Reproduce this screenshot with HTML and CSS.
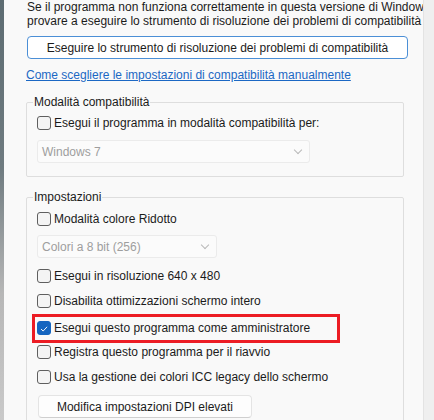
FILE: index.html
```html
<!DOCTYPE html>
<html lang="it">
<head>
<meta charset="utf-8">
<link rel="stylesheet" href="styles.css">
</head>
<body>
<div class="window">
  <div class="edge-left"></div>
  <div class="panel">
    <p class="intro">Se il programma non funziona correttamente in questa versione di Windows,<br>provare a eseguire lo strumento di risoluzione dei problemi di compatibilità</p>
    <button class="btn btn-primary">Eseguire lo strumento di risoluzione dei problemi di compatibilità</button>
    <a class="link" href="#">Come scegliere le impostazioni di compatibilità manualmente</a>

    <fieldset class="group group-compat">
      <legend>Modalità compatibilità</legend>
      <label class="check"><span class="box"></span>Esegui il programma in modalità compatibilità per:</label>
      <div class="select select-wide"><span>Windows 7</span><span class="chev"></span></div>
    </fieldset>

    <fieldset class="group group-settings">
      <legend>Impostazioni</legend>
      <label class="check first"><span class="box"></span>Modalità colore Ridotto</label>
      <div class="select select-narrow"><span>Colori a 8 bit (256)</span><span class="chev"></span></div>
      <label class="check after-select"><span class="box"></span>Esegui in risoluzione 640 x 480</label>
      <label class="check"><span class="box"></span>Disabilita ottimizzazioni schermo intero</label>
      <label class="check highlighted"><span class="box checked"><svg viewBox="0 0 14 14" width="14" height="14"><path d="M3.8 7.3 L6 9.4 L10.3 4.8" fill="none" stroke="#fff" stroke-width="1.1" stroke-linecap="round" stroke-linejoin="round"/></svg></span>Esegui questo programma come amministratore</label>
      <label class="check after-highlight"><span class="box"></span>Registra questo programma per il riavvio</label>
      <label class="check"><span class="box"></span>Usa la gestione dei colori ICC legacy dello schermo</label>
      <button class="btn btn-secondary">Modifica impostazioni DPI elevati</button>
    </fieldset>
  </div>
  <div class="edge-right"></div>
</div>
</body>
</html>
```

FILE: styles.css
```css
html, body {
  margin: 0;
  padding: 0;
}
body {
  width: 434px;
  height: 420px;
  overflow: hidden;
  background: #efefef;
  font-family: "Liberation Sans", Arial, sans-serif;
  font-size: 12px;
  color: #1b1b1b;
}
.window {
  display: flex;
  height: 420px;
}
.edge-left {
  width: 4px;
  flex: none;
  background: linear-gradient(to bottom, #5d6c72 0%, #6f7b80 40%, #b7b7b7 70%, #c9c9c9 100%);
}
.panel {
  width: 420px;
  flex: none;
  background: #f9f9f9;
  border-right: 1px solid #e3e3e3;
  box-sizing: border-box;
  padding: 0 0 0 22px;
  overflow: hidden;
  display: flex;
  flex-direction: column;
  align-items: flex-start;
}
.panel > * {
  flex: none;
}
.edge-right {
  flex: 1;
  background: #efefef;
}
.intro {
  margin: 0 0 0 1px;
  line-height: 14px;
  white-space: nowrap;
}
.btn {
  font-family: inherit;
  font-size: 12px;
  color: #1b1b1b;
  background: #fdfdfd;
  border-radius: 4px;
  box-sizing: border-box;
  padding: 0;
  cursor: default;
}
.btn-primary {
  margin: 8px 0 0 1px;
  width: 381px;
  height: 23px;
  border: 1px solid #4b8fd6;
  background: #ffffff;
}
.link {
  margin-top: 9px;
  line-height: 14px;
  color: #1c68c4;
  text-decoration: underline;
}
.group {
  margin: 13px 0 0 0;
  width: 378px;
  box-sizing: border-box;
  border: 1px solid #dedede;
  border-radius: 2px;
  padding: 0 0 0 10px;
  display: flex;
  flex-direction: column;
  align-items: flex-start;
}
.group > * {
  flex: none;
}
.group legend {
  margin-left: -4px;
  padding: 0 1px;
  line-height: 14px;
}
.group-compat {
  padding-bottom: 13px;
  gap: 8px;
}
.group-compat .check {
  margin-top: 5px;
}
.group-settings {
  gap: 7px;
  padding-bottom: 20px;
}
.group-settings .first {
  margin-top: 6px;
}
.group-settings .after-select {
  margin-top: 2px;
}
.group-settings .highlighted {
  margin-top: 2px;
}
.group-settings .after-highlight {
  margin-top: -1px;
}
.group-settings .btn-secondary {
  margin-top: 2px;
}
.check {
  position: relative;
  display: flex;
  align-items: center;
  height: 18px;
  line-height: 18px;
  white-space: nowrap;
}
.box {
  width: 14px;
  height: 14px;
  box-sizing: border-box;
  border: 1px solid #5f5f5f;
  border-radius: 3px;
  background: #f4f4f4;
  margin-right: 3px;
  flex: none;
  display: flex;
}
.box.checked {
  background: #1565c0;
  border-color: #1565c0;
}
.highlighted::after {
  content: "";
  position: absolute;
  left: -5px;
  top: -5px;
  width: 308px;
  height: 29px;
  box-sizing: border-box;
  border: 3px solid #ec1c24;
}
.select {
  height: 23px;
  box-sizing: border-box;
  border: 1px solid #ebebeb;
  border-radius: 3px;
  background: #fbfbfb;
  color: #9e9e9e;
  display: flex;
  align-items: center;
  justify-content: space-between;
  padding: 0 8px 0 4px;
}
.select-wide {
  width: 273px;
}
.select-narrow {
  width: 180px;
}
.chev {
  width: 5px;
  height: 5px;
  border-right: 1px solid #b9b9b9;
  border-bottom: 1px solid #b9b9b9;
  transform: rotate(45deg);
  margin-top: -4px;
}
.btn-secondary {
  width: 214px;
  height: 23px;
  border: 1px solid #e4e4e4;
  border-bottom-color: #cfcfcf;
  margin-left: 1px;
}
```
